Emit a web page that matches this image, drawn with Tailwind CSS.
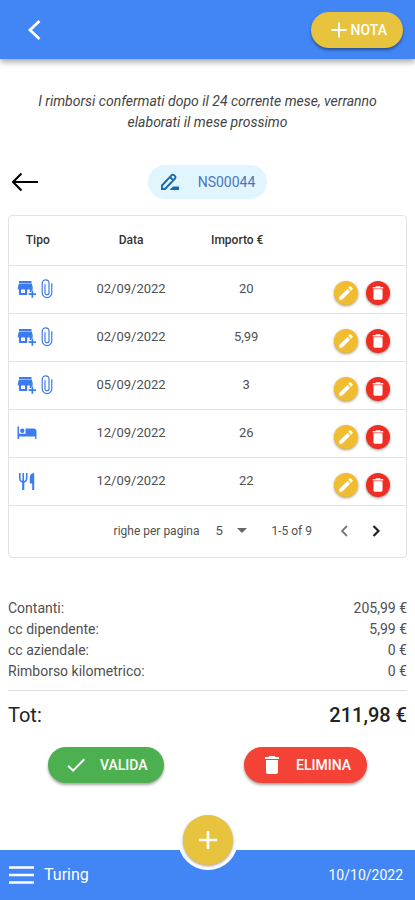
<!DOCTYPE html>
<html lang="it">
<head>
<meta charset="utf-8">
<meta name="viewport" content="width=device-width, initial-scale=1">
<title>Nota spese NS00044</title>
<script src="https://cdn.jsdelivr.net/npm/@tailwindcss/browser@4"></script>
</head>
<body class="bg-white font-[Roboto,sans-serif] text-sm text-[#505050]">
<svg class="hidden" aria-hidden="true">
  <symbol id="plus" viewBox="0 0 24 24"><path fill="currentColor" d="M19.500 13h-6.500v6.500h-2V13H4.500v-2H11V4.500h2V11h6.500z"/></symbol>
  <symbol id="trash" viewBox="0 0 24 24"><path fill="currentColor" d="M6 19c0 1.100.9 2 2 2h8c1.100 0 2-.9 2-2V7H6v12zM19 4h-3.500l-1-1h-5l-1 1H5v2h14V4z"/></symbol>
  <symbol id="pencil" viewBox="0 0 24 24"><path fill="currentColor" d="M3 17.250V21h3.750L17.810 9.940l-3.750-3.750L3 17.250zM20.710 7.040a1 1 0 0 0 0-1.410l-2.340-2.340a1 1 0 0 0-1.410 0l-1.830 1.830 3.750 3.750 1.830-1.830z"/></symbol>
  <symbol id="store" viewBox="0 0 20 18"><path fill="currentColor" d="M2 1h12.500v2H2zM1.800 3.600h13l1 4.200v1.600h-1V12h-2V9.400h-2.600V15H2V9.400H.8V7.800zM4 9.400v3.600h4V9.400zM14.500 10.500h1.700v2.800H19V15h-2.800v2.800h-1.700V15h-2.800v-1.700h2.800z" fill-rule="evenodd"/></symbol>
  <symbol id="clip" viewBox="0 0 12 20"><path fill="none" stroke="currentColor" stroke-width="1.200" stroke-linecap="round" d="M10.800 4.500v9.300a4.800 4.800 0 0 1-9.600 0V4.300a3.400 3.400 0 0 1 6.800 0v9.400a2 2 0 0 1-4 0V5.500"/></symbol>
</svg>
<div class="flex min-h-screen flex-col">
  <header class="flex h-[59px] items-center justify-between bg-[#4285f4] pr-3 pl-6 text-white shadow-[0_3px_6px_rgba(0,0,0,0.35)]">
    <button type="button" aria-label="Indietro"><svg class="size-6" viewBox="0 0 24 24"><path d="M15.500 3 6 12l9.500 9" fill="none" stroke="currentColor" stroke-width="2.700"/></svg></button>
    <button type="button" class="flex h-9 items-center rounded-full bg-[#e8c33e] px-4 font-medium shadow-[0_2px_3px_rgba(0,0,0,0.4)]"><svg class="size-6"><use href="#plus"/></svg>NOTA</button>
  </header>

  <main class="flex-1 px-2">
    <p class="px-4 pt-8 text-center leading-[21px] text-[#444] italic">I rimborsi confermati dopo il 24 corrente mese, verranno elaborati il mese prossimo</p>

    <div class="mt-8 grid grid-cols-[1fr_auto_1fr] items-center">
      <button type="button" aria-label="Torna alla lista" class="ml-1 justify-self-start text-black"><svg class="h-5 w-7" viewBox="0 0 28 20"><path d="M26 10H1.500M9.500 1.500 1 10l8.500 8.500" fill="none" stroke="currentColor" stroke-width="2"/></svg></button>
      <button type="button" class="flex h-[34px] items-center gap-[18px] rounded-full bg-[#e1f5fe] px-3 text-[#4a76bb]">
        <svg class="size-5 text-[#1668b0]" viewBox="0 0 20 20"><path d="M2 17v-3.500L11.700 3.200a1.600 1.600 0 0 1 2.300 0l1 1a1.600 1.600 0 0 1 0 2.300L5 17zM10 5l3.300 3.300" fill="none" stroke="currentColor" stroke-width="1.900"/><path d="M9.500 18l3.500-3.500h6V18z" fill="currentColor"/></svg>NS00044
      </button>
      <span></span>
    </div>

    <section class="mt-4 rounded border border-[#e3e3e3]">
      <table class="w-full table-fixed text-center text-[13px]">
        <colgroup><col class="w-[17%]"><col class="w-[27%]"><col class="w-[31%]"><col class="w-[25%]"></colgroup>
        <thead>
          <tr class="h-[49px] border-b border-[#e3e3e3] text-xs text-[#333]"><th scope="col" class="pr-2.5 font-medium">Tipo</th><th scope="col" class="pl-0.5 font-medium">Data</th><th scope="col" class="pr-4 font-medium">Importo €</th><th scope="col" aria-label="Azioni"></th></tr>
        </thead>
        <tbody id="rows"></tbody>
      </table>
      <div class="flex h-[51px] items-center justify-end pr-[18px] text-xs">
        <label for="size">righe per pagina</label>
        <div class="relative ml-4 flex items-center">
          <select id="size" class="w-8 appearance-none bg-transparent text-[13px]"><option>5</option><option>10</option></select>
          <svg class="pointer-events-none absolute right-0 h-[5px] w-[10px]" viewBox="0 0 10 5"><path d="M0 0h10L5 5z" fill="#666"/></svg>
        </div>
        <span class="ml-6">1-5 of 9</span>
        <button type="button" aria-label="Pagina precedente" class="ml-5 text-[#777]"><svg class="size-6" viewBox="0 0 24 24"><path d="m15 7-5 5 5 5" fill="none" stroke="currentColor" stroke-width="1.800"/></svg></button>
        <button type="button" aria-label="Pagina successiva" class="ml-2 text-[#222]"><svg class="size-6" viewBox="0 0 24 24"><path d="m9.500 7 5 5-5 5" fill="none" stroke="currentColor" stroke-width="2.200"/></svg></button>
      </div>
    </section>

    <dl class="mt-10 grid grid-cols-[1fr_auto] leading-[21px]">
      <dt>Contanti:</dt><dd class="text-right">205,99 €</dd>
      <dt>cc dipendente:</dt><dd class="text-right">5,99 €</dd>
      <dt>cc aziendale:</dt><dd class="text-right">0 €</dd>
      <dt>Rimborso kilometrico:</dt><dd class="text-right">0 €</dd>
    </dl>
    <div class="mt-2 flex justify-between border-t border-[#dcdcdc] pt-2.5 text-xl leading-7 font-medium text-[#222]"><span class="font-normal">Tot:</span><span>211,98 €</span></div>

    <div class="mt-[18px] flex justify-between px-10 font-medium text-white">
      <button type="button" class="flex h-9 items-center gap-3 rounded-full bg-[#4caf50] px-4 shadow-[0_2px_3px_rgba(0,0,0,0.35)]"><svg class="size-6" viewBox="0 0 24 24"><path fill="currentColor" d="M9 16.170 4.830 12l-1.420 1.410L9 19 21 7l-1.410-1.410z"/></svg>VALIDA</button>
      <button type="button" class="flex h-9 items-center gap-3 rounded-full bg-[#f44336] px-4 shadow-[0_2px_3px_rgba(0,0,0,0.35)]"><svg class="size-6"><use href="#trash"/></svg>ELIMINA</button>
    </div>
  </main>

  <footer class="relative flex h-[50px] items-center bg-[#4285f4] pr-3 pl-2 text-white">
    <button type="button" class="flex items-center gap-2.5 text-base"><svg class="h-[18px] w-[26px]" viewBox="0 0 26 18"><path d="M1 1.500h25M1 9h25M1 16.500h25" stroke="currentColor" stroke-width="2.400"/></svg>Turing</button>
    <time datetime="2022-10-10" class="ml-auto">10/10/2022</time>
    <div class="absolute -top-10 left-1/2 flex size-[60px] -translate-x-1/2 items-center justify-center rounded-full bg-white">
      <button type="button" aria-label="Aggiungi" class="flex size-[50px] items-center justify-center rounded-full bg-[#e8c33e] shadow-[0_1px_3px_rgba(0,0,0,0.4)]"><svg class="size-[18px]" viewBox="0 0 18 18"><path d="M9 0v18M0 9h18" stroke="currentColor" stroke-width="2.600"/></svg></button>
    </div>
  </footer>
</div>
<script>
const shop = '<svg class="h-[18px] w-5"><use href="#store"/></svg><svg class="h-5 w-3"><use href="#clip"/></svg>';
const bed = '<svg class="h-4 w-5" viewBox="0 0 20 16"><path fill="currentColor" d="M.5 1.500h1.600v7.200H8.500v-5.200H16.500a3 3 0 0 1 3 3V14H18.100v-2.600h-16V14H.5zM5.300 8a2.200 2.200 0 1 0 0-4.400 2.200 2.200 0 0 0 0 4.400z"/></svg>';
const food = '<svg class="h-5 w-5" viewBox="0 0 20 20"><path fill="none" stroke="currentColor" stroke-width="1.600" d="M2.800 2v5.500a3.200 3.200 0 0 0 6.900 0V2M6.250 2v8"/><path fill="currentColor" d="M5.200 9.500h2.100V19H5.200zM17.200 2v17h-2v-6.500h-2.400V6c0-2 2-4 4.400-4z"/></svg>';
const data = [[shop,'02/09/2022','20'],[shop,'02/09/2022','5,99'],[shop,'05/09/2022','3'],[bed,'12/09/2022','26'],[food,'12/09/2022','22']];
document.getElementById('rows').innerHTML = data.map(([icon, date, amount]) => `
<tr class="h-12 border-b border-[#e3e3e3]">
  <td><div class="flex items-center gap-1 pl-2 text-[#3b7df0]">${icon}</div></td>
  <td class="pl-0.5">${date}</td><td class="pl-0.5">${amount}</td>
  <td><div class="flex justify-end gap-2 pt-2 pr-4 text-white">
    <button type="button" aria-label="Modifica" class="flex size-6 items-center justify-center rounded-full bg-[#f0bc30] shadow-[0_1px_3px_rgba(0,0,0,0.4)]"><svg class="size-[18px]"><use href="#pencil"/></svg></button>
    <button type="button" aria-label="Elimina" class="flex size-6 items-center justify-center rounded-full bg-[#f02d22] shadow-[0_1px_3px_rgba(0,0,0,0.4)]"><svg class="size-[18px]"><use href="#trash"/></svg></button>
  </div></td>
</tr>`).join('');
</script>
</body>
</html>
